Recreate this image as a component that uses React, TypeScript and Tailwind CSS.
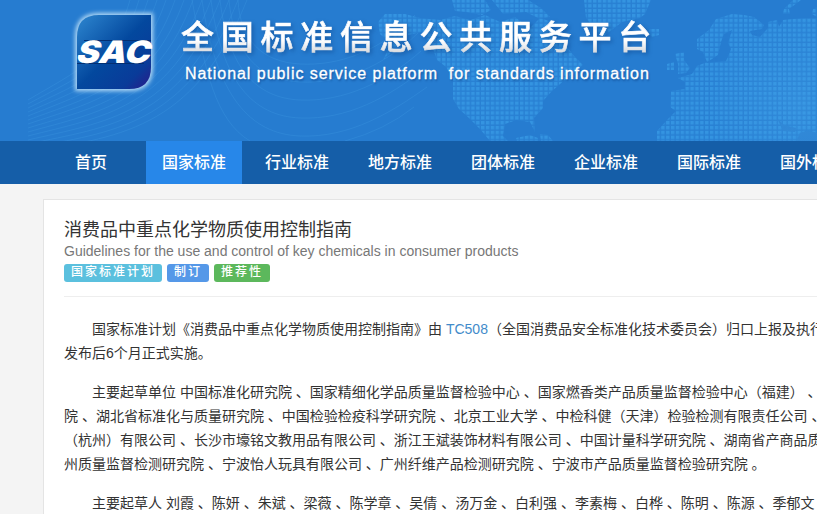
const navItems = ["首页", "国家标准", "行业标准", "地方标准", "团体标准", "企业标准", "国际标准", "国外标准"];

const drafters = [
  "刘霞", "陈妍", "朱斌", "梁薇", "陈学章", "吴倩", "汤万金", "白利强", "李素梅", "白桦", "陈明", "陈源", "季郁文",
];

function WorldBackdrop() {
  return (
    <svg className="absolute inset-0" width="817" height="141" viewBox="0 0 817 141" fill="none">
      <defs>
        <pattern id="dots" x="729.4" y="13.9" width="4.87" height="4.87" patternUnits="userSpaceOnUse">
          <rect width="4.87" height="4.87" fill="#2880d3" />
          <rect width="3.4" height="3.4" fill="#3494e1" />
        </pattern>
        <radialGradient id="shine" gradientUnits="userSpaceOnUse" cx="800" cy="105" r="90">
          <stop offset="0" stopColor="#4aa6ea" stopOpacity="0.25" />
          <stop offset="1" stopColor="#4aa6ea" stopOpacity="0" />
        </radialGradient>
      </defs>

      {/* flowing lines */}
      <g stroke="#3a94de" strokeOpacity="0.4">
        {Array.from({ length: 14 }, (_, i) => (
          <path
            key={i}
            d={`M28 ${100 + i * 4} C${75 + i * 3} ${72 + i * 5} ${115 + i * 6} ${55 + i * 6} ${130 + i * 9} 0`}
          />
        ))}
        {[0, 1, 2, 3, 4].map((i) => (
          <path
            key={i}
            d={`M${238 - i * 9} 0 C${240 - i * 6} ${40 + i * 14} ${262 - i * 3} ${62 + i * 18} 300 ${64 + i * 18} S${380 + i * 3} ${52 + i * 15} ${415 + i * 3} ${15 + i * 18}`}
          />
        ))}
        <path d="M192 0 C205 70 215 120 250 141" />
        <path d="M345 141 Q385 130 414 107" />
      </g>

      {/* continents */}
      <g fill="url(#dots)">
        <path d="M378 22 L385 14 L405 14 L420 18 L440 20 L455 16 L470 20 L485 15 L500 22 L515 17 L530 28 L540 18 L552 22 L550 36 L563 42 L575 57 L583 65 L572 74 L560 84 L551 92 L543 101 L543 108 L534 118 L535 132 L530 122 L516 120 L505 124 L503 136 L508 141 H490 L480 129 L469 118 L459 109 L453 99 L453 79 L446 67 L437 60 L432 46 L422 32 L408 35 L397 46 L383 60 L391 44 L380 34Z" />
        <path d="M452 0 H485 L491 10 L482 15 L466 12 L455 11Z M492 0 H528 L541 8 L550 17 L540 19 L526 12 L503 14Z" />
        <path d="M584 0 H651 L645 14 L640 18 L622 22 L604 36 L596 31 L586 18Z M650 29 H659 V35 L652 37 L648 33Z" />
        <path d="M516 138 L530 135 L538 138 V141 H517Z M540 134 L548 135 L553 141 H541Z" />
        <path d="M675 54 L684 52 L684 60 L690 68 L686 73 L678 74 L678 64Z M667 64 L674 62 V70 L667 70Z" />
        <path d="M657 141 L657 131 L668 119 L676 111 L670 107 L671 91 L685 89 L685 82 L678 78 L692 74 L697 66 L707 62 L703 52 L697 49 L697 39 L709 30 L716 19 L732 14 L744 15 L754 17 L764 25 L762 29 L750 31 L752 35 L760 37 L768 28 L768 22 L777 20 L779 27 L783 20 L802 18 L817 18 V141Z" />
        <path d="M783 14 L784 9 L793 0 H801 L789 9 L790 14Z M812 14 L813 9 L817 7 V17Z" />
      </g>
      <path d="M724 34 L732 30 L728 43 L731 49 L726 61 L706 63 L718 55 L721 42Z" fill="#267cd0" />
      <path d="M777 118 L784 125 L796 128 L795 132 L783 131Z" fill="#2b82d3" />
      <path d="M796 141 L800 133 L808 130 L817 133 V141Z" fill="#2b82d3" />
      <path d="M700 141 L720 40 L817 15 V141Z" fill="url(#shine)" />
    </svg>
  );
}

function Logo() {
  return (
    <svg className="absolute left-[62px] top-0" width="104" height="104" viewBox="62 0 104 104">
      <defs>
        <linearGradient id="face" x1="0" y1="0" x2="1" y2="1">
          <stop offset="0" stopColor="#2e87d0" />
          <stop offset="0.5" stopColor="#03489e" />
          <stop offset="0.8" stopColor="#093b99" />
          <stop offset="1" stopColor="#2b1989" />
        </linearGradient>
        <filter id="glow" x="-25%" y="-25%" width="150%" height="150%">
          <feGaussianBlur stdDeviation="2.2" />
        </filter>
      </defs>
      <path
        d="M99 15 H151 V67 Q151 89 129 89 H77 V37 Q77 15 99 15Z"
        fill="#b4daf5"
        stroke="#b4daf5"
        strokeWidth="4"
        filter="url(#glow)"
      />
      <path d="M99 15 H151 V67 Q151 89 129 89 H77 V37 Q77 15 99 15Z" fill="url(#face)" />
      <path d="M84 40.5 H151 M77 63.5 H144" stroke="#032f72" strokeWidth="1" />
      <text
        transform="translate(75 63) skewX(-16)"
        fontFamily="Inter, sans-serif"
        fontWeight="900"
        fontSize="31"
        fill="#fff"
        textLength="74"
        lengthAdjust="spacingAndGlyphs"
      >
        SAC
      </text>
    </svg>
  );
}

function Header() {
  return (
    <header className="relative h-[141px] overflow-hidden bg-[#267cd0]">
      <WorldBackdrop />
      <Logo />
      <div className="relative pt-[14px] pl-[181px] whitespace-nowrap">
        <div className="drop-shadow-[2px_2px_2px_rgba(0,40,100,0.35)]">
          <h1 className="bg-linear-to-b from-white from-55% to-[#cfd3d8] to-85% bg-clip-text text-[33px] leading-[48px] font-medium tracking-[6.75px] text-transparent [-webkit-text-stroke:0.7px_transparent]">
            全国标准信息公共服务平台
          </h1>
        </div>
        <p className="ml-1 text-base leading-6 tracking-[0.96px] whitespace-pre text-white [-webkit-text-stroke:0.3px_white] [text-shadow:1px_2px_2px_rgba(0,40,100,0.4)]">
          {"National public service platform  for standards information"}
        </p>
      </div>
    </header>
  );
}

function Nav() {
  return (
    <nav className="flex h-[43px] gap-[7px] overflow-hidden bg-[#155ea8] pl-[43px]">
      {navItems.map((name) => (
        <a
          key={name}
          href="#"
          className={`w-24 shrink-0 text-center text-base leading-[43px] font-medium text-white ${
            name === "国家标准" ? "bg-[#2787e9]" : ""
          }`}
        >
          {name}
        </a>
      ))}
    </nav>
  );
}

function Tag({ color, children }: { color: string; children: string }) {
  return (
    <span className={`h-[18px] rounded-[3px] px-[7px] text-xs leading-[17px] font-medium tracking-[2px] text-white ${color}`}>
      {children}
    </span>
  );
}

export default function App() {
  return (
    <div className="h-[514px] w-[817px] overflow-hidden bg-[#f4f4f4] font-['Liberation_Sans','Noto_Sans_CJK_SC',sans-serif] text-[#333]">
      <Header />
      <Nav />

      <main className="mt-[15px] ml-[43px] h-[400px] w-[1170px] border border-[#e4e4e4] bg-white px-5 pt-[17px] whitespace-nowrap">
        <h2 className="text-lg leading-[26px]">消费品中重点化学物质使用控制指南</h2>
        <h3 className="text-sm leading-4 text-[#777]">
          Guidelines for the use and control of key chemicals in consumer products
        </h3>
        <div className="mt-[5px] flex gap-[5px]">
          <Tag color="bg-[#5bc0de]">国家标准计划</Tag>
          <Tag color="bg-[#5598e8]">制订</Tag>
          <Tag color="bg-[#5cb85c]">推荐性</Tag>
        </div>
        <hr className="mt-[14px] border-[#eee]" />

        <div className="mt-5 space-y-[15px] text-sm leading-6">
          <p className="indent-7">
            国家标准计划《消费品中重点化学物质使用控制指南》由{" "}
            <a href="#" className="text-[#428bca]">TC508</a>（全国消费品安全标准化技术委员会）归口上报及执行
            <br />
            发布后6个月正式实施。
          </p>
          <p className="indent-7">
            主要起草单位 中国标准化研究院 、国家精细化学品质量监督检验中心 、国家燃香类产品质量监督检验中心（福建） 、
            <br />
            院 、湖北省标准化与质量研究院 、中国检验检疫科学研究院 、北京工业大学 、中检科健（天津）检验检测有限责任公司 、
            <br />
            （杭州）有限公司 、长沙市壕铭文教用品有限公司 、浙江王斌装饰材料有限公司 、中国计量科学研究院 、湖南省产商品质
            <br />
            州质量监督检测研究院 、宁波怡人玩具有限公司 、广州纤维产品检测研究院 、宁波市产品质量监督检验研究院 。
          </p>
          <p className="indent-7">主要起草人 {drafters.join(" 、")}</p>
        </div>
      </main>
    </div>
  );
}
